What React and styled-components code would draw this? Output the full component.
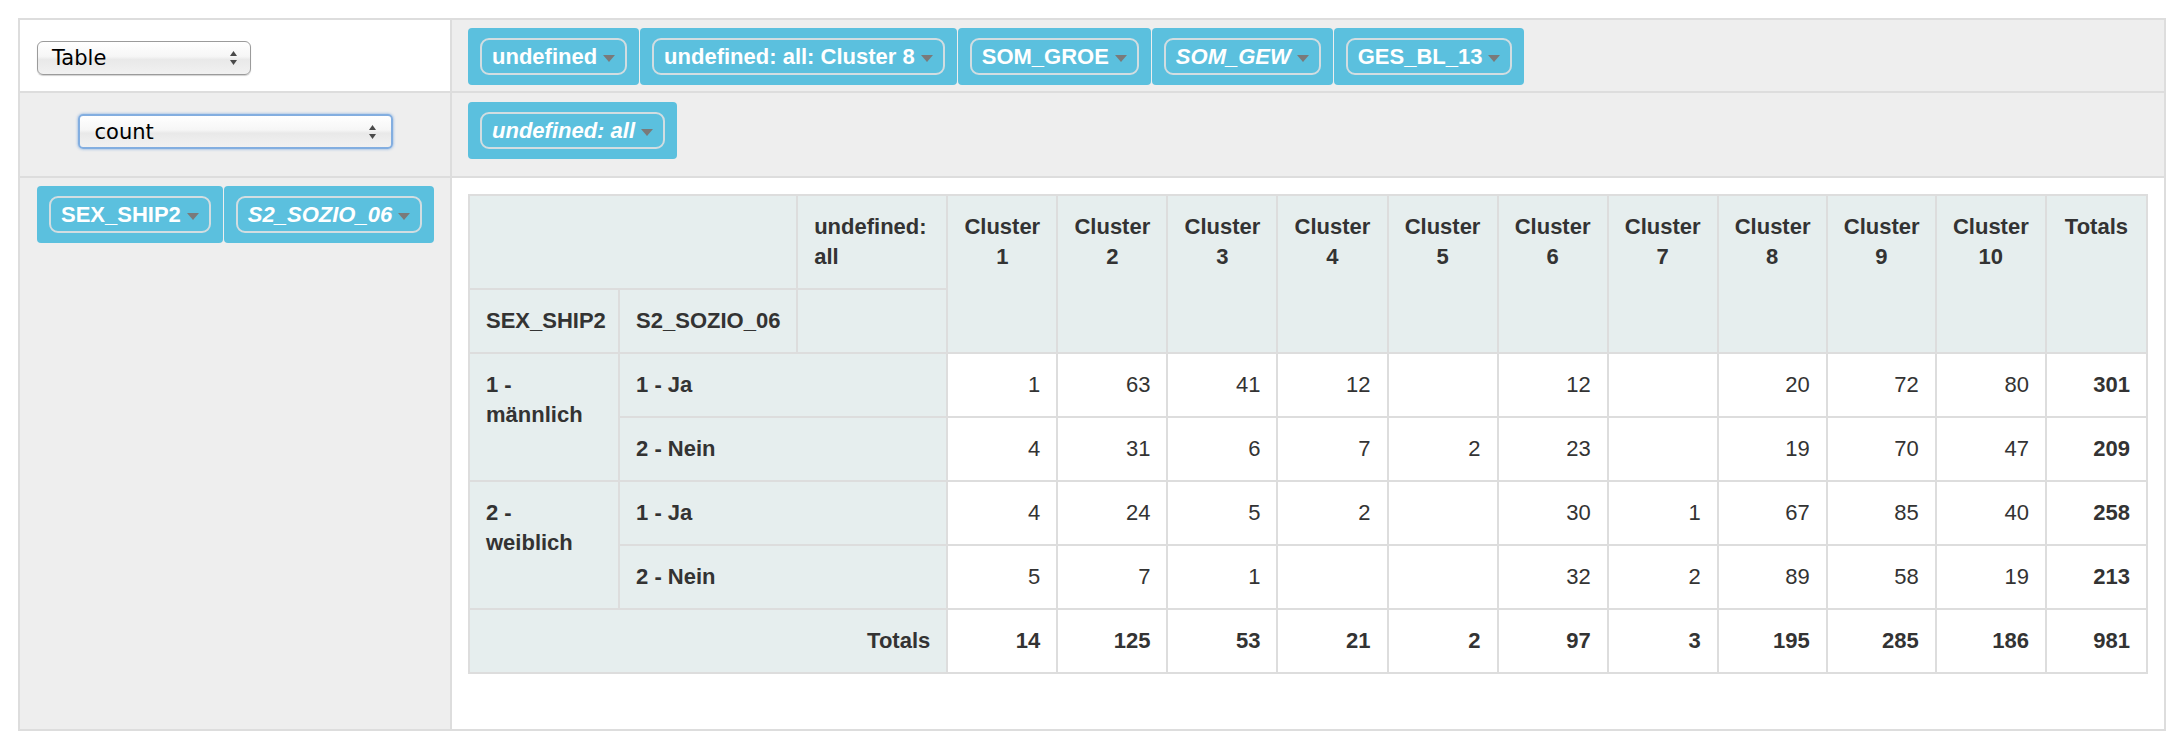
import React from "react";
import styled, { createGlobalStyle } from "styled-components";

const Global = createGlobalStyle`
  html, body { margin: 0; padding: 0; background: #fff; }
  body { font-family: "Liberation Sans", Arial, Helvetica, sans-serif; color: #333; }
`;

const Frame = styled.div`
  margin: 18px;
  display: grid;
  grid-template-columns: 430px 1fr;
  grid-template-rows: 71px 83px 551px;
  gap: 2px;
  padding: 2px;
  background: #dddddd;
`;

const RendererCell = styled.div`
  background: #fff;
  padding: 21px 0 0 17px;
`;

const AggregatorCell = styled.div`
  background: #eeeeee;
  display: flex;
  justify-content: center;
  align-items: flex-start;
  padding-top: 21px;
`;

const AxisCell = styled.div`
  background: #eeeeee;
  display: flex;
  flex-wrap: ${(p) => (p.$nowrap ? "nowrap" : "wrap")};
  align-items: flex-start;
  align-content: flex-start;
  gap: 1px;
  padding: ${(p) => p.$pad};
  overflow: hidden;
`;

const OutputCell = styled.div`
  background: #fff;
  padding: 16px 16px 0 16px;
`;

const SelectBox = styled.div`
  box-sizing: border-box;
  width: ${(p) => p.$w}px;
  height: ${(p) => p.$h}px;
  display: flex;
  align-items: center;
  justify-content: space-between;
  padding: 0 ${(p) => (p.$focused ? 15 : 13)}px 0 ${(p) => (p.$focused ? 15 : 14)}px;
  border: ${(p) => (p.$focused ? "2px solid #83aee0" : "1px solid #9b9b9b")};
  border-radius: ${(p) => (p.$focused ? 5 : 6)}px;
  background: linear-gradient(#ffffff 0%, #f6f6f6 45%, #e9e9e9 55%, #f1f1f1 100%);
  box-shadow: ${(p) =>
    p.$focused ? "0 0 3px rgba(90,150,220,0.8)" : "0 1px 1px rgba(0,0,0,0.18)"};
  font-family: "DejaVu Sans", "Liberation Sans", sans-serif;
  font-size: 21px;
  color: #000;
`;

const UpDown = () => (
  <svg width="7" height="14" viewBox="0 0 7 14" aria-hidden="true">
    <path d="M3.5 0 L7 5 H0 Z" fill="#4a4a4a" />
    <path d="M0 9 H7 L3.5 14 Z" fill="#4a4a4a" />
  </svg>
);

const Select = ({ value, w, h, focused }) => (
  <SelectBox $w={w} $h={h} $focused={focused}>
    <span>{value}</span>
    <UpDown />
  </SelectBox>
);

const AttrBox = styled.div`
  flex: none;
  background: #5bc0de;
  border-radius: 4px;
  padding: 10px 12px;
`;

const AttrPill = styled.span`
  display: inline-flex;
  align-items: center;
  gap: 6px;
  border: 2px solid #d2dde1;
  border-radius: 9px;
  padding: 4px 10px 4px 10px;
  color: #fff;
  font-weight: bold;
  font-size: 22px;
  line-height: 25px;
  font-style: ${(p) => (p.$italic ? "italic" : "normal")};
  white-space: nowrap;
`;

const Triangle = styled.span`
  width: 0;
  height: 0;
  border-left: 6.5px solid transparent;
  border-right: 6.5px solid transparent;
  border-top: 7px solid #7a7a7a;
  margin-top: 3px;
`;

const Attr = ({ name, italic }) => (
  <AttrBox>
    <AttrPill $italic={italic}>
      {name}
      <Triangle />
    </AttrPill>
  </AttrBox>
);

const PvtTable = styled.table`
  width: 100%;
  table-layout: fixed;
  border-collapse: collapse;
  font-size: 22px;
  line-height: 30px;
  color: #333;
`;

const Col = styled.col`
  width: ${(p) => p.$w}px;
`;

const HeadCell = styled.th`
  background: #e6eeee;
  border: 2px solid #dddddd;
  padding: 16px;
  font-weight: bold;
  vertical-align: top;
  text-align: ${(p) => p.$align || "left"};
`;

const ValCell = styled.td`
  background: #fff;
  border: 2px solid #dddddd;
  padding: 16px;
  text-align: right;
  vertical-align: top;
  font-weight: ${(p) => (p.$total ? "bold" : "normal")};
`;

const clusters = ["1", "2", "3", "4", "5", "6", "7", "8", "9", "10"];

const rows = [
  { group: "1 - männlich", label: "1 - Ja", vals: [1, 63, 41, 12, "", 12, "", 20, 72, 80], total: 301 },
  { label: "2 - Nein", vals: [4, 31, 6, 7, 2, 23, "", 19, 70, 47], total: 209 },
  { group: "2 - weiblich", label: "1 - Ja", vals: [4, 24, 5, 2, "", 30, 1, 67, 85, 40], total: 258 },
  { label: "2 - Nein", vals: [5, 7, 1, "", "", 32, 2, 89, 58, 19], total: 213 },
];

const colTotals = [14, 125, 53, 21, 2, 97, 3, 195, 285, 186];

const OutputTable = () => (
  <PvtTable>
    <colgroup>
      <Col $w={150} />
      <Col $w={178} />
      <Col $w={150} />
      {clusters.map((c) => (
        <Col key={c} $w={c === "8" || c === "9" ? 109 : 110} />
      ))}
      <Col $w={101} />
    </colgroup>
    <thead>
      <tr>
        <HeadCell colSpan={2} />
        <HeadCell>undefined: all</HeadCell>
        {clusters.map((c) => (
          <HeadCell key={c} rowSpan={2} $align="center">
            Cluster {c}
          </HeadCell>
        ))}
        <HeadCell rowSpan={2} $align="center">
          Totals
        </HeadCell>
      </tr>
      <tr>
        <HeadCell>SEX_SHIP2</HeadCell>
        <HeadCell>S2_SOZIO_06</HeadCell>
        <HeadCell />
      </tr>
    </thead>
    <tbody>
      {rows.map((r, i) => (
        <tr key={i}>
          {r.group && <HeadCell rowSpan={2}>{r.group}</HeadCell>}
          <HeadCell colSpan={2}>{r.label}</HeadCell>
          {r.vals.map((v, j) => (
            <ValCell key={j}>{v}</ValCell>
          ))}
          <ValCell $total>{r.total}</ValCell>
        </tr>
      ))}
      <tr>
        <HeadCell colSpan={3} $align="right">
          Totals
        </HeadCell>
        {colTotals.map((v, j) => (
          <ValCell key={j} $total>
            {v}
          </ValCell>
        ))}
        <ValCell $total>981</ValCell>
      </tr>
    </tbody>
  </PvtTable>
);

export default function App() {
  return (
    <>
      <Global />
      <Frame>
        <RendererCell>
          <Select value="Table" w={214} h={34} />
        </RendererCell>
        <AxisCell $pad="8px 16px">
          <Attr name="undefined" />
          <Attr name="undefined: all: Cluster 8" />
          <Attr name="SOM_GROE" />
          <Attr name="SOM_GEW" italic />
          <Attr name="GES_BL_13" />
        </AxisCell>
        <AggregatorCell>
          <Select value="count" w={315} h={35} focused />
        </AggregatorCell>
        <AxisCell $pad="9px 16px">
          <Attr name="undefined: all" italic />
        </AxisCell>
        <AxisCell $pad="8px 0 8px 17px" $nowrap>
          <Attr name="SEX_SHIP2" />
          <Attr name="S2_SOZIO_06" italic />
        </AxisCell>
        <OutputCell>
          <OutputTable />
        </OutputCell>
      </Frame>
    </>
  );
}
